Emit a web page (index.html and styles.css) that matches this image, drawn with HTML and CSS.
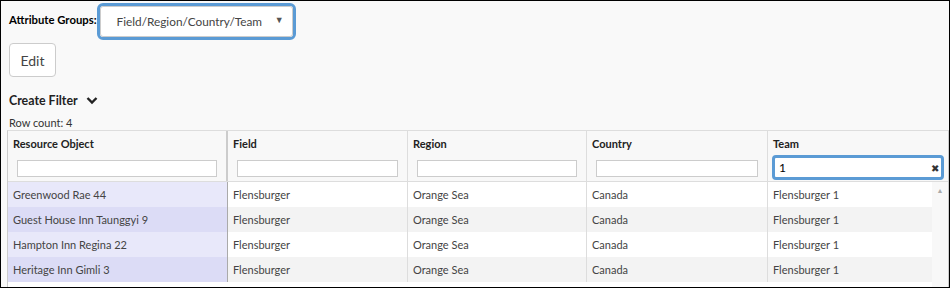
FILE: index.html
```html
<!DOCTYPE html>
<html lang="en">
<head>
  <meta charset="UTF-8">
  <title>Attribute Groups</title>
  <link rel="stylesheet" href="styles.css">
</head>
<body>
  <div class="frame">
    <div class="toolbar">
      <label class="label" for="groups">Attribute Groups:</label>
      <div class="select-ring">
        <div class="select" id="groups">
          <span>Field/Region/Country/Team</span>
          <span class="caret">&#9660;</span>
        </div>
      </div>
    </div>

    <button class="btn">Edit</button>

    <div class="filter-toggle">
      <span>Create Filter</span>
      <svg width="12" height="9" viewBox="0 0 12 9"><path d="M1.5 2 L6 6.5 L10.5 2" fill="none" stroke="#222" stroke-width="2.4"/></svg>
    </div>

    <div class="row-count">Row count: 4</div>

    <div class="grid">
      <div class="head">
        <div class="hcell c1 pinned">
          <div class="htitle">Resource Object</div>
          <input class="hfilter" type="text">
        </div>
        <div class="hcell c2">
          <div class="htitle">Field</div>
          <input class="hfilter" type="text">
        </div>
        <div class="hcell c3">
          <div class="htitle">Region</div>
          <input class="hfilter" type="text">
        </div>
        <div class="hcell c4">
          <div class="htitle">Country</div>
          <input class="hfilter" type="text">
        </div>
        <div class="hcell c5">
          <div class="htitle">Team</div>
          <div class="hfilter active">
            <span>1</span>
            <span class="clear">&#10006;</span>
          </div>
        </div>
      </div>

      <div class="body">
        <div class="rows">
          <div class="row">
            <div class="cell c1 pinned">Greenwood Rae 44</div>
            <div class="cell c2">Flensburger</div>
            <div class="cell c3">Orange Sea</div>
            <div class="cell c4">Canada</div>
            <div class="cell c5">Flensburger 1</div>
          </div>
          <div class="row">
            <div class="cell c1 pinned">Guest House Inn Taunggyi 9</div>
            <div class="cell c2">Flensburger</div>
            <div class="cell c3">Orange Sea</div>
            <div class="cell c4">Canada</div>
            <div class="cell c5">Flensburger 1</div>
          </div>
          <div class="row">
            <div class="cell c1 pinned">Hampton Inn Regina 22</div>
            <div class="cell c2">Flensburger</div>
            <div class="cell c3">Orange Sea</div>
            <div class="cell c4">Canada</div>
            <div class="cell c5">Flensburger 1</div>
          </div>
          <div class="row">
            <div class="cell c1 pinned">Heritage Inn Gimli 3</div>
            <div class="cell c2">Flensburger</div>
            <div class="cell c3">Orange Sea</div>
            <div class="cell c4">Canada</div>
            <div class="cell c5">Flensburger 1</div>
          </div>
        </div>
        <div class="scrollbar">
          <span class="up">&#9650;</span>
        </div>
      </div>
    </div>
  </div>
</body>
</html>
```

FILE: styles.css
```css
* {
  box-sizing: border-box;
}
body {
  margin: 0;
  font-family: Lato, "Open Sans", sans-serif;
  color: #333;
}
.frame {
  width: 950px;
  height: 288px;
  border: 1px solid #000;
  background: #f9f9f9;
  padding: 1px 0 0 6px;
  display: flex;
  flex-direction: column;
  align-items: flex-start;
}
.toolbar {
  display: flex;
  align-items: center;
  height: 38px;
}
.label {
  font-size: 11.3px;
  font-weight: bold;
  color: #000;
  padding-left: 2px;
  margin-top: -3px;
}
.select-ring {
  border: 3px solid #5b9bd5;
  border-radius: 6px;
}
.select {
  width: 193px;
  height: 31px;
  background: #fff;
  border: 1px solid #ccc;
  border-radius: 3px;
  display: flex;
  align-items: center;
  justify-content: space-between;
  padding: 0 8px 0 16px;
  font-size: 11.8px;
  color: #444;
}
.caret {
  font-size: 9px;
  color: #555;
  margin-top: -4px;
}
.btn {
  margin: 3px 0 0 2px;
  width: 47px;
  height: 34px;
  background: #fff;
  border: 1px solid #ccc;
  border-radius: 4px;
  font-family: inherit;
  font-size: 14px;
  color: #444;
  padding: 0;
}
.filter-toggle {
  display: flex;
  align-items: center;
  gap: 8px;
  margin: 16px 0 0 2px;
  font-size: 12.4px;
  font-weight: bold;
  color: #222;
}
.row-count {
  margin: 8px 0 0 2px;
  font-size: 11px;
  color: #333;
}
.grid {
  margin-top: 1px;
  width: 942px;
  flex: 1;
  border-left: 1px solid #ccc;
  border-right: 1px solid #ccc;
  border-top: 1px solid #ddd;
  display: flex;
  flex-direction: column;
  font-size: 11px;
}
.head {
  display: flex;
  height: 51px;
  background: #f8f8f8;
  border-bottom: 1px solid #ddd;
}
.hcell {
  border-right: 1px solid #ddd;
  padding: 5px 9px 0 4px;
  display: flex;
  flex-direction: column;
}
.hcell.pinned {
  border-right: 2px solid #ccc;
}
.htitle {
  font-weight: bold;
  color: #222;
  height: 19px;
  padding-left: 1px;
  padding-top: 1px;
}
.hfilter {
  margin: 5px 0 0 5px;
  height: 17px;
  border: 1px solid #ccc;
  background: #fff;
  font-family: inherit;
  font-size: 12px;
}
.hfilter.active {
  margin: 0;
  height: 25px;
  border: 3px solid #5b9bd5;
  border-radius: 4px;
  display: flex;
  align-items: center;
  justify-content: space-between;
  padding: 0 2px 0 4px;
  color: #000;
}
.clear {
  font-size: 10px;
  color: #333;
}
.c1 { width: 220px; }
.c2 { width: 180px; }
.c3 { width: 179px; }
.c4 { width: 181px; }
.c5 { width: 180px; }
.hcell.c5 {
  border-right: none;
  padding: 0 4px;
}
.hcell.c5 .htitle {
  padding-top: 6px;
  height: 24px;
}
.body {
  flex: 1;
  display: flex;
  background: #fff;
}
.rows {
  width: 924px;
}
.row {
  display: flex;
  height: 25px;
  background: #fff;
}
.row:nth-child(even) {
  background: #f3f3f3;
}
.cell {
  display: flex;
  align-items: center;
  padding-left: 5px;
  border-right: 1px solid #ddd;
  color: #444;
  white-space: nowrap;
}
.cell.pinned {
  background: #e8e8fa;
  border-right: 1px solid #aaa;
}
.row:nth-child(even) .cell.pinned {
  background: #dcdcf6;
}
.cell.c5 {
  width: 164px;
  border-right: none;
}
.scrollbar {
  flex: 1;
  background: #f8f8f8;
  display: flex;
  justify-content: center;
  padding-top: 4px;
}
.up {
  font-size: 7px;
  color: #aaa;
}
```
